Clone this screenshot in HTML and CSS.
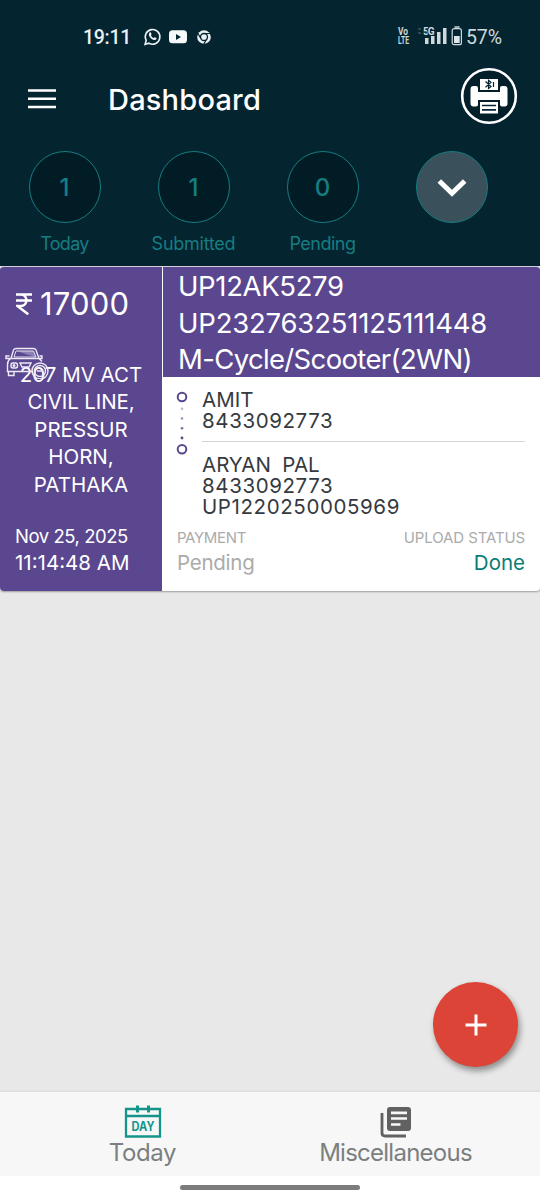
FILE: index.html
```html
<!DOCTYPE html>
<html lang="en">
<head>
<meta charset="utf-8">
<title>Dashboard</title>
<link rel="stylesheet" href="styles.css">
</head>
<body>
<div class="screen">
  <header class="top">
    <div class="status">
      <span class="clock">19:11</span>
      <svg class="apps" width="72" height="20" viewBox="0 0 72 20">
        <path d="M2.100 17.300 3.200 13.400A7.300 7.300 0 1 1 6 16.200Z" fill="none" stroke="#e9f1f2" stroke-width="1.600"/>
        <path d="M6.600 5.600c.8-.7 1.400-.2 1.900 1.400.2.7-.7 1-.5 1.500.6 1.200 1.300 1.900 2.500 2.400.6.2.9-.8 1.500-.6 1.500.7 2 1 1.300 2-1 1.300-2.900 1-5-.6C5.900 9.800 5.100 7.400 6.600 5.600Z" fill="#e9f1f2"/>
        <rect x="26" y="3.300" width="18" height="13" rx="3.500" fill="#f4f8f8"/><path d="M33 7v6l5-3z" fill="#042430"/>
        <circle cx="61" cy="10" r="6.800" fill="#e9f1f2"/><circle cx="61" cy="10" r="3.500" fill="#e9f1f2" stroke="#042430" stroke-width="1.300"/>
        <path d="M61 6.500h6.500M58 11.800 54.800 6.200M64 11.800 60.800 17" stroke="#042430" stroke-width="1.200"/>
      </svg>
      <svg class="volte" width="13" height="22" viewBox="0 0 13 22"><text x="1" y="10" textLength="10" lengthAdjust="spacingAndGlyphs">Vo</text><text x="1" y="18.500" textLength="11" lengthAdjust="spacingAndGlyphs">LTE</text></svg>
      <svg class="signal" width="32" height="20" viewBox="0 0 32 20">
        <path d="M2 3h3M2 7h3" stroke="#3d5660" stroke-width="1.500"/>
        <path d="M9 12h3.500v6H9zM15 10h3.500v8H15zM21 6h3.500v12H21zM27 2h3.500v16H27z" fill="#cfd9dc"/>
        <text x="7" y="9" class="net" textLength="11.500">5G</text>
      </svg>
      <svg class="battery" width="12" height="20" viewBox="0 0 12 20">
        <path d="M3.500 1h5" stroke="#cfd9dc" stroke-width="1.500"/>
        <rect x="1.200" y="2.700" width="9.200" height="16" rx="2" fill="none" stroke="#cfd9dc" stroke-width="1.200"/>
        <path d="M3 10h5.700v7H3z" fill="#dde5e7"/>
      </svg>
      <span class="percent">57%</span>
    </div>
    <div class="appbar">
      <svg class="menu" width="28" height="20" viewBox="0 0 28 20"><path d="M0 1.500h28M0 9.800h28M0 18h28" stroke="#fff" stroke-width="2.600"/></svg>
      <h1 class="title">Dashboard</h1>
      <svg class="printer" width="58" height="58" viewBox="0 0 58 58">
        <circle cx="29" cy="29" r="26.800" fill="#031f29" stroke="#fff" stroke-width="2.600"/>
        <path d="M20 12h18v11H20z" fill="#fff"/>
        <path d="M13.500 19h2.500q2 0 2 2v4h22v-4q0-2 2-2h2.500q3 0 3 3v14.500q0 3-3 3h-2.500q-2 0-2-2V33H18v4.500q0 2-2 2h-2.500q-3 0-3-3V22q0-3 3-3z" fill="#fff"/>
        <path d="M20 35h18v11.500H20z" fill="#fff"/>
        <path d="M22 38.500h14M22 42.800h14" stroke="#042430" stroke-width="1.700"/>
        <path d="M25.500 14.500l5.500 5-2.500 2V13.300l2.500 2-5.500 5M33.500 15v5" fill="none" stroke="#042430" stroke-width="1.200"/>
      </svg>
    </div>
    <div class="stats">
      <div class="stat"><div class="ring">1</div><span class="s-today">Today</span></div>
      <div class="stat"><div class="ring">1</div><span class="s-sub">Submitted</span></div>
      <div class="stat"><div class="ring">0</div><span class="s-pend">Pending</span></div>
      <div class="stat"><div class="ring expand"><svg width="30" height="20" viewBox="0 0 30 20"><path d="M2.300 3 15 15.300 27.700 3" fill="none" stroke="#fff" stroke-width="5"/></svg></div></div>
    </div>
  </header>
  <main class="content">
    <article class="card">
      <section class="left">
        <div class="amount"><svg class="rupee" width="16" height="24" viewBox="0 0 17 24"><path d="M0 1.800h17M0 8.300h17M1 1.800h4c8 0 8 12.400 0 12.400H1.500L13 22.800" fill="none" stroke="#fff" stroke-width="2.700"/></svg><span>17000</span></div>
        <div class="offence">
          <svg class="car" width="46" height="32" viewBox="0 0 46 32" fill="none" stroke="#eeeaf6" stroke-width="1.400">
            <path d="M6 11.500 8.500 3q.7-1.500 2.500-1.500h17.500q1.800 0 2.500 1.500l3 8.500z"/>
            <path d="M12 4h16.500l2.500 6-9-2.500z" fill="#8c80b4" stroke="none"/><path d="M9 10 11 4h17.500l2.500 6z" stroke-width=".9"/>
            <path d="M5.500 11.500H1v-2.500h3.500M34.500 11.500H37V9h-2.500M5.500 11.500q-3 2-3 6v7H28M34 11.500l3 3M3.500 24.500v4H9v-4"/>
            <rect x="6" y="16" width="6.500" height="5" rx="2"/><circle cx="9" cy="18.500" r=".8"/><path d="M15 16h11l-2 4h-7z"/>
            <circle cx="35" cy="24" r="8"/><circle cx="35" cy="24" r="5.500"/><path d="M32 24h6"/>
          </svg>
          <div class="o1">207 MV ACT</div><div class="o2">CIVIL LINE,</div><div class="o3">PRESSUR</div><div class="o4">HORN,</div><div class="o5">PATHAKA</div>
        </div>
        <div class="date">Nov 25, 2025</div>
        <div class="time">11:14:48 AM</div>
      </section>
      <section class="right">
        <div class="vehicle"><div class="v1">UP12AK5279</div><div class="v2">UP232763251125111448</div><div class="v3">M-Cycle/Scooter(2WN)</div></div>
        <div class="people">
          <svg class="track" width="12" height="66" viewBox="0 0 12 66"><g fill="none" stroke="#5a478f" stroke-width="2"><circle cx="6" cy="6" r="4.300"/><circle cx="6" cy="58.300" r="4.300"/></g><g fill="#5a478f"><circle cx="6" cy="17.800" r="1.300" opacity=".4"/><circle cx="6" cy="27.500" r="1.300" opacity=".6"/><circle cx="6" cy="37.300" r="1.300" opacity=".8"/><circle cx="6" cy="47" r="1.400"/></g></svg>
          <div class="names">
            <div class="person first"><div class="n1">AMIT</div><div class="n2">8433092773</div></div>
            <div class="person"><div class="n3">ARYAN&nbsp; PAL</div><div class="n2">8433092773</div><div class="n4">UP1220250005969</div></div>
          </div>
        </div>
        <div class="labels"><span class="l1">PAYMENT</span><span class="l2">UPLOAD STATUS</span></div>
        <div class="values"><span class="p1">Pending</span><span class="p2">Done</span></div>
      </section>
    </article>
    <button class="fab" aria-label="Add"><svg width="22" height="22" viewBox="0 0 22 22"><path d="M11 .5v21M.5 11h21" stroke="#fff" stroke-width="3"/></svg></button>
  </main>
  <nav class="tabs">
    <div class="tab">
      <svg width="38" height="34" viewBox="0 0 38 34"><path d="M2 4h34v27.500H2zM2 11h34" fill="none" stroke="#15958a" stroke-width="2.300"/><path d="M13.500 .5v7M24.500 .5v7" stroke="#15958a" stroke-width="3"/><text x="7.500" y="25.500" textLength="23" lengthAdjust="spacingAndGlyphs" class="day">DAY</text></svg>
      <span class="t1">Today</span>
    </div>
    <div class="tab">
      <svg width="38" height="34" viewBox="0 0 38 34"><path d="M5 8v20q0 3 3 3h21" fill="none" stroke="#616161" stroke-width="2.800"/><rect x="10" y="2" width="24" height="24" rx="3" fill="#616161"/><path d="M14 7.800h16M14 13.500h16M14 19.500h9.500" stroke="#f7f7f7" stroke-width="2.700"/></svg>
      <span class="t2">Miscellaneous</span>
    </div>
  </nav>
  <div class="gesture"><div class="pill"></div></div>
</div>
</body>
</html>
```
FILE: styles.css
```css
* { box-sizing: border-box; }
body { margin: 0; font-family: Inter, "Liberation Sans", sans-serif; font-weight: 400; }
svg { display: block; flex: none; }
.screen { width: 540px; height: 1200px; display: flex; flex-direction: column; background: #e8e8e8; overflow: hidden; white-space: nowrap; }
.top { height: 266px; background: #042430; flex: none; }
.status { height: 66px; padding: 7px 0 0 83px; display: flex; align-items: center; font-family: Roboto, sans-serif; color: #e9f1f2; }
.clock { width: 60px; padding-top: 1px; font-size: 19.500px; font-weight: 500; letter-spacing: -.3px; }
.volte { margin: -2px 6px 0 182px; fill: #cfd9dc; font: 700 10px Roboto, sans-serif; }
.net { font: 700 10px Roboto, sans-serif; fill: #cfd9dc; stroke: #042430; stroke-width: 2px; paint-order: stroke; }
.battery { margin-left: 3px; margin-top: -1px; }
.signal { margin-top: -1px; }
.percent { margin-left: 3px; padding-top: 1px; font-size: 19.500px; letter-spacing: -.1px; color: #cfd9dc; }
.appbar { height: 66px; padding-left: 28px; display: flex; align-items: center; color: #fff; }
.title { width: 352px; margin: 2px 0 0 52px; font-size: 29px; line-height: 36px; font-weight: 500; letter-spacing: .2px; }
.printer { margin-top: -7px; }
.stats { padding: 19px 0 0 0; display: flex; }
.stat { width: 129px; display: flex; flex-direction: column; align-items: center; font-size: 18px; line-height: 24px; color: #167d82; gap: 9px; }
.s-today { letter-spacing: -.7px; }
.s-sub { letter-spacing: -.25px; }
.s-pend { letter-spacing: -.5px; }
.ring { width: 72px; height: 72px; padding-top: 1px; border: 1.500px solid #167d82; border-radius: 50%; background: #021c25; display: flex; align-items: center; justify-content: center; font-size: 24px; font-weight: 500; }
.expand { background: #3a505a; }
.content { height: 826px; flex: none; position: relative; }
.card { height: 325px; border-top: 1px solid #d4d0df; border-radius: 4px; overflow: hidden; display: flex; background: #fff; box-shadow: 0 1px 2px #0005; }
.left { width: 162px; background: #5a478f; color: #fff; }
.amount { height: 74px; padding: 0 0 1px 16px; display: flex; align-items: center; gap: 8px; font-size: 31px; line-height: 40px; letter-spacing: .2px; }
.offence { height: 172px; position: relative; padding-top: 19.500px; text-align: center; font-size: 20.500px; line-height: 27.500px; }
.o2 { letter-spacing: -.1px; }
.car { position: absolute; left: 5px; top: 6px; }
.date { padding: 11px 0 0 15px; font-size: 18.500px; line-height: 24px; letter-spacing: -.45px; }
.time { padding: 3px 0 0 15px; font-size: 20.500px; line-height: 24px; }
.right { flex: 1; color: #353a40; padding-left: 1px; }
.vehicle { height: 109.500px; padding: 1px 0 0 15px; background: #5a478f; color: #fff; font-size: 27.500px; line-height: 36.500px; }
.v1 { letter-spacing: -.35px; }
.v2 { letter-spacing: -.2px; }
.v3 { letter-spacing: -.65px; }
.people { height: 149px; padding: 14px 15px 0 13px; display: flex; gap: 14px; }
.names { flex: 1; font-size: 20.500px; line-height: 21px; }
.n2, .n4 { letter-spacing: .6px; }
.person { padding-top: 12.500px; }
.first { height: 53px; padding: 0; margin-top: -2px; border-bottom: 1px solid #d5d5d5; }
.labels { height: 24px; padding: 0 15px 0 14px; display: flex; justify-content: space-between; align-items: center; font-size: 15px; color: #ababab; }
.l1 { letter-spacing: -.35px; }
.l2 { letter-spacing: -.12px; }
.values { height: 26px; padding: 0 15px 0 14px; display: flex; justify-content: space-between; align-items: center; font-size: 20.500px; color: #ababab; }
.p1 { letter-spacing: -.25px; }
.p2 { color: #0b7d75; }
.fab { position: absolute; right: 22px; bottom: 25px; width: 85px; height: 85px; padding: 0; border: 0; border-radius: 50%; background: #db4437; display: flex; align-items: center; justify-content: center; box-shadow: 2px 4px 6px #0006; }
.tabs { height: 84px; flex: none; display: flex; padding: 0 18px 0 16px; background: #f7f7f7; box-shadow: 0 -1px 2px #0001; }
.tab { flex: 1; padding-top: 13px; display: flex; flex-direction: column; align-items: center; font-size: 24px; line-height: 28px; color: #7b7f80; }
.t1 { letter-spacing: -.4px; }
.t2 { letter-spacing: -.75px; }
.day { font: 700 12.500px Inter, sans-serif; fill: #15958a; }
.gesture { height: 24px; padding-top: 9px; background: #fff; }
.pill { width: 180px; height: 5px; margin: 0 auto; border-radius: 3px; background: #7c7c7c; }
```
